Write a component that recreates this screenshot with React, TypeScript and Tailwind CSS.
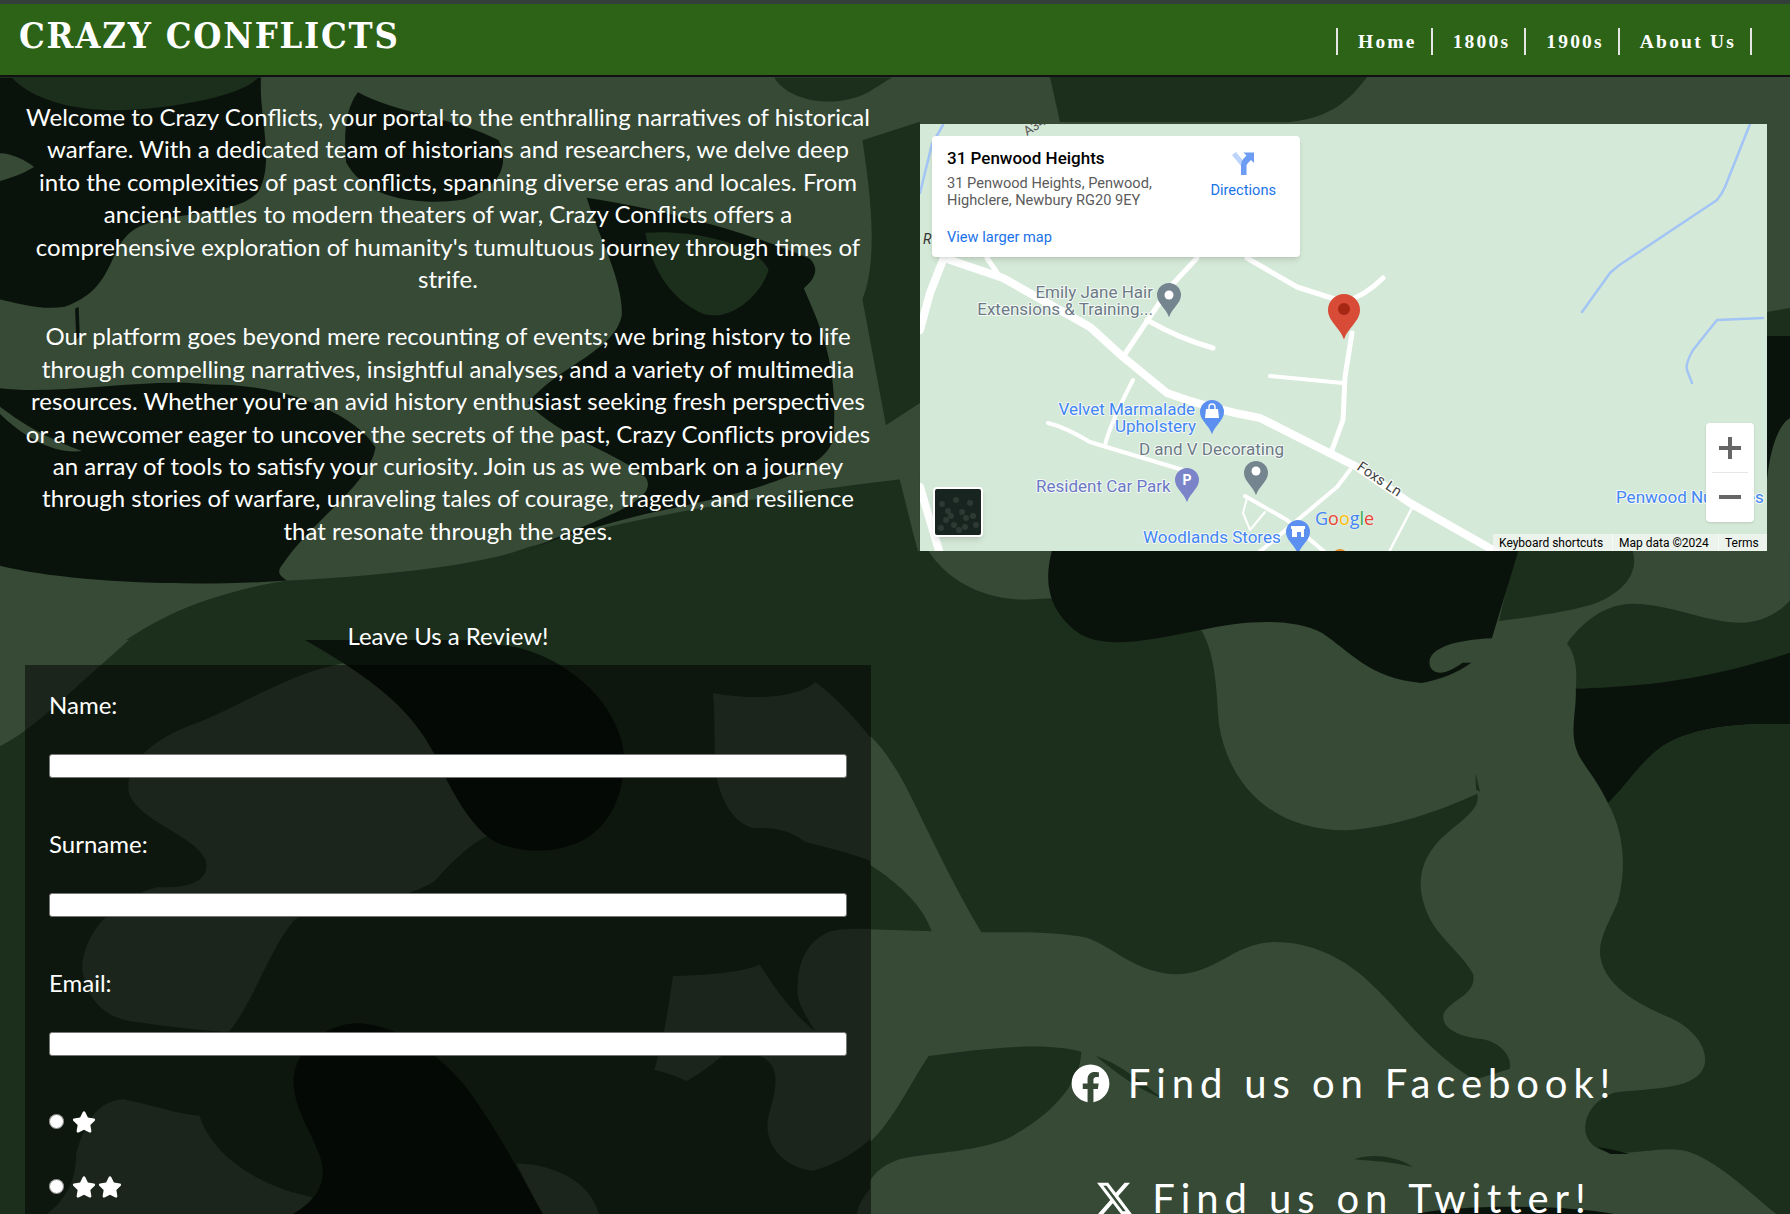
import { FaFacebook, FaStar } from "react-icons/fa";
import { FaXTwitter } from "react-icons/fa6";

const LIGHT = "#364a36";
const MID = "#1c2e1c";
const DARK = "#0a130b";

const CamoBackground = () => (
  <svg className="absolute inset-0" width="1790" height="1214" viewBox="0 0 1790 1214">
    <rect width="1790" height="1214" fill={LIGHT} />

    {/* top left */}
    <g transform="translate(0 70) scale(0.5867 0.37)">
      <path fill={DARK} d="M0 20H445C440 120 470 250 440 330C400 400 280 380 230 430C180 480 200 590 110 640C70 650 30 630 0 620Z" />
      <path fill={MID} d="M20 20C60 90 150 120 250 105C340 90 420 60 440 20Z" />
      <path fill={LIGHT} d="M0 225C20 225 45 245 58 262C40 280 20 290 0 300Z" />
      <path fill={DARK} d="M610 60C680 120 780 130 850 190C870 260 850 320 790 350C700 370 620 340 590 250C585 170 590 100 610 60Z" />
      <path fill={DARK} d="M0 860C100 880 250 830 360 850C500 850 610 940 640 1020C630 1120 530 1220 480 1340C470 1360 480 1370 490 1380C300 1400 100 1380 0 1340Z" />
      <path fill={LIGHT} d="M0 930C40 990 90 1040 140 1030C90 1000 50 970 0 910Z" />
      <path fill={MID} d="M190 1568C250 1500 330 1420 490 1380C600 1370 800 1350 900 1290C1100 1200 1300 1150 1568 1100V1568Z" />
      <path fill={DARK} d="M1000 345C1100 370 1250 420 1380 510C1400 540 1385 570 1370 590C1400 700 1430 800 1420 1000C1400 1100 1250 1150 1100 1200C1000 1240 920 1280 900 1300C1000 1220 1130 1170 1100 1100C1060 1040 950 990 900 900C950 800 1050 760 1060 660C1060 560 1020 450 1000 345Z" />
      <path fill={MID} d="M1100 440C1180 430 1290 470 1310 540C1300 600 1250 680 1200 660C1140 620 1110 530 1100 440Z" />
      <path fill={MID} d="M1568 140L1470 190C1480 300 1500 500 1470 620L1510 960L1568 900Z" />
      <path fill={LIGHT} d="M1568 920L1512 968L1556 1250L1568 1320Z" />
      <path fill={MID} d="M1320 20C1340 80 1420 110 1480 60L1520 20Z" />
      <path fill={DARK} d="M128 645L134 640L136 720L130 730Z" />
    </g>

    {/* top right, around the map */}
    <path fill={MID} d="M1050 77H1367C1350 100 1330 118 1290 122H1060Z" />
    <path fill={MID} d="M1767 312L1790 308V340L1767 343Z" />
    <path fill={DARK} d="M1767 336H1790V418C1778 425 1770 450 1767 480Z" />

    {/* form area */}
    <g transform="translate(0 640) scale(0.5867 0.366)">
      <rect width="1568" height="1568" fill={MID} />
      <path fill={LIGHT} d="M0 0H220C170 70 130 130 80 200C50 240 25 270 0 290Z" />
      <path fill={LIGHT} d="M600 60C500 80 400 190 330 230C260 270 210 340 220 420C240 500 330 530 350 600C360 650 330 680 270 675C200 700 140 800 140 900C150 1000 190 1040 240 1045C300 1060 370 1070 390 1070C430 1000 470 800 510 755C600 740 700 700 740 660C790 570 820 540 840 530C790 470 770 400 740 310C700 190 650 110 600 60Z" />
      <path fill={DARK} d="M520 0C640 110 700 190 740 310C770 420 810 530 850 555C900 590 970 580 1010 530C1060 470 1070 350 1060 280C1040 150 960 50 880 20L800 0Z" />
      <path fill={LIGHT} d="M1215 145C1280 165 1360 160 1390 115C1450 190 1500 290 1530 380C1560 460 1568 600 1568 720C1540 650 1500 610 1460 590C1420 570 1390 560 1370 550C1350 520 1310 510 1285 515C1250 500 1230 440 1222 380C1215 300 1220 200 1215 145Z" />
      <path fill={LIGHT} d="M1568 795V1150C1540 1250 1500 1400 1385 1450C1330 1440 1300 1370 1310 1300C1320 1240 1335 1170 1300 1140L1250 1110C1220 1150 1200 1180 1170 1205C1150 1190 1130 1180 1115 1175C1130 1100 1140 1000 1147 918C1200 915 1260 910 1295 887C1320 950 1350 1020 1390 1070C1370 1020 1355 980 1360 940C1360 860 1390 790 1440 790C1480 785 1530 795 1568 795Z" />
      <path fill={LIGHT} d="M130 1400C150 1300 170 1260 210 1255C260 1270 300 1295 340 1300C360 1400 430 1490 540 1525L500 1568H80C120 1520 130 1460 130 1400Z" />
      <path fill={LIGHT} d="M880 1430C950 1430 1010 1490 1020 1568H925Z" />
      <path fill={LIGHT} d="M1568 1420C1510 1450 1470 1500 1460 1568H1568Z" />
      <path fill={DARK} d="M500 1200C505 1110 560 1040 620 1048C690 1060 770 1150 820 1280C870 1400 900 1500 925 1568H500C540 1530 560 1480 545 1410C530 1340 500 1280 500 1200Z" />
    </g>

    {/* bottom right */}
    <g transform="translate(870 551) scale(0.5867 0.4298)">
      <rect y="0" width="1568" height="1568" fill={LIGHT} />
      <g transform="translate(0 -25)">
        <path fill={MID} d="M0 25H100C130 90 190 140 270 138L310 135L565 210C590 270 590 350 595 430C610 560 680 675 810 675C890 670 970 630 1035 590C1040 620 1020 640 985 680C940 730 930 790 945 850C960 920 1010 960 1028 1010C1035 1060 985 1070 977 1105C975 1140 1010 1155 1040 1160C1085 1170 1095 1215 1090 1230L1030 1255C950 1190 900 1090 860 1040C810 970 750 935 690 935C620 935 590 1010 520 1010C450 1005 420 950 370 925C320 910 250 912 190 912C140 800 90 650 60 570C40 520 20 480 0 455Z" />
        <path fill={MID} d="M0 755C50 800 90 850 105 910L0 905Z" />
        <path fill={MID} d="M100 1200C180 1185 290 1165 360 1190C360 1260 310 1340 230 1395C170 1425 100 1425 50 1440C20 1455 10 1470 0 1490V1400C40 1350 70 1260 100 1200Z" />
        <path fill={MID} d="M1100 25C1090 90 1080 140 1072 188C1130 178 1200 165 1240 145C1290 115 1310 70 1300 25Z" />
        <path fill={MID} d="M1188 240C1220 180 1260 148 1300 148C1370 150 1430 195 1490 192C1530 188 1555 160 1568 140V265C1480 300 1400 335 1300 340L1203 345C1205 310 1205 270 1188 240Z" />
        <path fill={DARK} d="M1203 345C1300 340 1400 335 1568 262V428C1480 425 1400 435 1350 480C1310 520 1290 570 1258 612C1240 560 1220 530 1208 500C1190 450 1205 400 1203 345Z" />
        <path fill={MID} d="M1568 428C1480 425 1400 435 1350 480C1310 520 1290 570 1258 612C1285 680 1290 760 1275 840C1260 890 1240 930 1245 970C1255 1050 1330 1090 1370 1115C1420 1150 1435 1210 1415 1240C1390 1280 1320 1275 1270 1285C1230 1300 1215 1350 1220 1380C1225 1405 1240 1420 1265 1425C1310 1430 1360 1405 1400 1425C1450 1450 1510 1530 1545 1568H1568Z" />
        <path fill={DARK} d="M310 25C295 100 305 170 360 220C410 255 480 230 560 210C640 185 720 180 770 215C820 260 850 320 940 332C970 325 1000 310 1025 285L1010 285C990 305 965 320 955 295C945 255 990 232 1060 228L1105 25Z" />
        <path fill={MID} d="M825 1440C860 1425 900 1435 925 1458C890 1445 860 1445 825 1440Z" />
        <path fill={MID} d="M385 1200C430 1220 470 1270 500 1300C460 1280 420 1240 385 1200Z" />
        <path fill={DARK} d="M930 1568C1000 1545 1180 1545 1270 1568Z" />
        <path fill={DARK} d="M1240 1412C1260 1415 1280 1422 1295 1428L1262 1428Z" />
        <path fill={MID} d="M1032 542L1040 585L1033 580Z" />
      </g>
    </g>
  </svg>
);

const Pin = ({ x, y, r, fill, children }: { x: number; y: number; r: number; fill: string; children?: React.ReactNode }) => (
  <g>
    <path
      fill={fill}
      d={`M${x} ${y + r * 1.85}C${x - r * 0.25} ${y + r * 1.1} ${x - r} ${y + r * 0.7} ${x - r} ${y}A${r} ${r} 0 1 1 ${x + r} ${y}C${x + r} ${y + r * 0.7} ${x + r * 0.25} ${y + r * 1.1} ${x} ${y + r * 1.85}Z`}
    />
    {children}
  </g>
);

const MapLabel = ({ x, y, fill, anchor, children }: { x: number; y: number; fill: string; anchor?: "end" | "start"; children: React.ReactNode }) => (
  <text x={x} y={y} fill={fill} textAnchor={anchor || "start"} fontSize="17" stroke="#ffffff" strokeOpacity="0.75" strokeWidth="2" paintOrder="stroke">
    {children}
  </text>
);

const satelliteSpecks = [
  [7, 15], [13, 22], [21, 11], [27, 23], [11, 31], [19, 36], [31, 29], [35, 14], [38, 27], [24, 41], [6, 39], [16, 27], [30, 38], [41, 36],
];

const GoogleMap = () => (
  <div className="relative w-[847px] h-[427px] bg-[#d5e9d8] overflow-hidden font-['Roboto',sans-serif]">
    <svg className="absolute inset-0" width="847" height="427" viewBox="0 0 847 427" fill="none" strokeLinecap="round" strokeLinejoin="round">
      {/* water */}
      <g stroke="#a3c5f5" strokeWidth="2.5">
        <path d="M830 0L805 63Q802 70 797 76L707 136Q697 142 690 149L662 188" />
        <path d="M843 194L797 196L773 226Q765 240 767 246L772 259" />
        <path d="M23 1L12 20L0 69" />
      </g>
      {/* roads */}
      <g stroke="#ffffff">
        <path strokeWidth="8" d="M30 136L83 154L170 203L203 233L247 269Q290 285 340 294L437 343L490 379L580 430" />
        <path strokeWidth="8" d="M23 136L10 169L0 206" />
        <path strokeWidth="8" d="M0 363L20 430" />
        <path strokeWidth="5" d="M67 134L80 153" />
        <path strokeWidth="5" d="M277 134L250 163L203 233" />
        <path strokeWidth="5" d="M227 196Q260 215 293 224" />
        <path strokeWidth="5" d="M327 134L377 163L424 178Q445 172 463 154" />
        <path strokeWidth="5" d="M432 209L425 253L423 296L412 326" />
        <path strokeWidth="4" d="M350 252L423 259" />
        <path strokeWidth="4" d="M128 299Q145 303 170 318L183 322L263 346" />
        <path strokeWidth="4" d="M213 256Q190 300 185 321" />
        <path strokeWidth="4" d="M430 346L417 363L337 430" />
        <path strokeWidth="4" d="M325 372L367 396L407 430" />
        <path strokeWidth="2" d="M327 374L323 389L330 406L345 388" />
        <path strokeWidth="2.5" d="M492 384L468 430" />
      </g>
      <g stroke="none">
        <text x="0" y="0" transform="translate(107 12) rotate(-32)" fill="#555" fontSize="13">A34</text>
        <text x="3" y="120" fill="#333" fontSize="14" fontStyle="italic">R</text>
        <text x="0" y="0" transform="translate(436 345) rotate(34)" fill="#444" fontSize="14.5" stroke="#fff" strokeWidth="2" paintOrder="stroke">Foxs Ln</text>
        <MapLabel x={233} y={174} fill="#6b7a85" anchor="end">Emily Jane Hair</MapLabel>
        <MapLabel x={233} y={191} fill="#6b7a85" anchor="end">Extensions &amp; Training...</MapLabel>
        <MapLabel x={275} y={291} fill="#4285f4" anchor="end">Velvet Marmalade</MapLabel>
        <MapLabel x={276} y={308} fill="#4285f4" anchor="end">Upholstery</MapLabel>
        <MapLabel x={219} y={331} fill="#6b7a85">D and V Decorating</MapLabel>
        <MapLabel x={116} y={368} fill="#6b78c6">Resident Car Park</MapLabel>
        <MapLabel x={223} y={419} fill="#4285f4">Woodlands Stores</MapLabel>
        <MapLabel x={696} y={379} fill="#4285f4">Penwood Nurseries</MapLabel>
        <Pin x={249} y={171} r={12} fill="#75858f"><circle cx="249" cy="171" r="4.5" fill="#fff" /></Pin>
        <Pin x={292} y={288} r={12} fill="#5b8ff0">
          <path fill="#fff" d="M286 285H298L299 294H285Z" />
          <path stroke="#fff" strokeWidth="1.4" fill="none" d="M289 285V283A3 3 0 0 1 295 283V285" />
        </Pin>
        <Pin x={336} y={349} r={12} fill="#75858f"><circle cx="336" cy="347" r="4.5" fill="#fff" /></Pin>
        <Pin x={267} y={356} r={12} fill="#7b84c9">
          <text x="267" y="361" fill="#fff" fontSize="14" fontWeight="700" textAnchor="middle">P</text>
        </Pin>
        <Pin x={378} y={408} r={12} fill="#5b8ff0">
          <path fill="#fff" d="M371 402H385V405H384V413H381V408H377V413H372V405H371Z" />
        </Pin>
        <circle cx="420" cy="433" r="8" fill="#e8912d" />
        <text x="395" y="401" fontSize="18" fontFamily="'Open Sans',sans-serif" stroke="#fff" strokeOpacity="0.5" strokeWidth="1" paintOrder="stroke">
          <tspan fill="#4285f4">G</tspan>
          <tspan fill="#ea4335">o</tspan>
          <tspan fill="#fbbc05">o</tspan>
          <tspan fill="#4285f4">g</tspan>
          <tspan fill="#34a853">l</tspan>
          <tspan fill="#ea4335">e</tspan>
        </text>
        <Pin x={424} y={186} r={16} fill="#d84b37"><circle cx="424" cy="185" r="6" fill="#a52714" /></Pin>
      </g>
    </svg>

    {/* info card */}
    <div className="absolute left-3 top-3 w-[368px] h-[121px] bg-white rounded-sm shadow-md pl-[15px] pr-6 pt-[12px] flex justify-between">
      <div>
        <div className="text-[17px] leading-5 font-medium text-black">31 Penwood Heights</div>
        <div className="mt-[7px] text-[14.6px] leading-[17px] text-[#5b5b5b]">
          31 Penwood Heights, Penwood,
          <br />
          Highclere, Newbury RG20 9EY
        </div>
        <div className="mt-5 text-[14.6px] leading-[17px] text-[#1a73e8]">View larger map</div>
      </div>
      <div className="flex flex-col items-center pt-[3px]">
        <svg width="24" height="24" viewBox="0 0 24 24">
          <path fill="#bcd3fb" d="M1 4L5 1L14 12V15H10Z" />
          <path fill="#6d9cf5" d="M10 24V14Q10 10 13 7L15.5 4.5L12.5 1.5H23V12L20 9L17 12Q15.5 13.5 15.5 15V24Z" />
        </svg>
        <div className="mt-[7px] text-[14.6px] leading-[17px] text-[#1a73e8]">Directions</div>
      </div>
    </div>

    {/* satellite thumb */}
    <div className="absolute left-[13px] top-[363px] w-[50px] h-[50px] border-2 border-white rounded-sm shadow-md bg-[#18241f]">
      <svg width="46" height="46" viewBox="0 0 46 46">
        {satelliteSpecks.map(([cx, cy]) => (
          <circle key={`${cx}-${cy}`} cx={cx} cy={cy} r="3" fill="#47564b" opacity="0.45" />
        ))}
      </svg>
    </div>

    {/* zoom control */}
    <div className="absolute left-[786px] top-[299px] w-12 h-[99px] bg-white rounded-sm shadow flex flex-col items-center">
      <svg className="mt-[13px]" width="24" height="24" viewBox="0 0 24 24"><path fill="#666" d="M10 1H14V10H23V14H14V23H10V14H1V10H10Z" /></svg>
      <div className="mt-[12px] w-9 h-px bg-[#e6e6e6]" />
      <svg className="mt-[12px]" width="24" height="24" viewBox="0 0 24 24"><path fill="#666" d="M1 10H23V14H1Z" /></svg>
    </div>

    {/* attribution */}
    <div className="absolute right-0 bottom-0 h-[17px] flex text-[12px] leading-[18px] text-black">
      <div className="bg-[#f5f5f5]/70 pl-[6px] border-r border-white/50 w-[120px]">Keyboard shortcuts</div>
      <div className="bg-[#f5f5f5]/70 pl-[6px] w-[106px] border-r border-white/50">Map data ©2024</div>
      <div className="bg-[#f5f5f5]/70 pl-[6px] w-[48px]">Terms</div>
    </div>
  </div>
);

const navLinks = ["Home", "1800s", "1900s", "About Us"];

const ReviewField = ({ label }: { label: string }) => (
  <div className="mb-[50px]">
    <label className="block text-[24px] leading-8 mb-[33px]">{label}</label>
    <input type="text" className="block w-full h-6 bg-white border border-[#767676] rounded-[3px]" />
  </div>
);

const StarOption = ({ count }: { count: number }) => (
  <div className="flex items-center h-[65px] gap-2">
    <input type="radio" name="stars" className="w-[15px] h-[15px] m-0" />
    <div className="flex gap-[2px]">
      {Array.from({ length: count }).map((_, i) => (
        <FaStar key={i} size={24} />
      ))}
    </div>
  </div>
);

const App = () => {
  return (
    <div className="relative w-[1790px] h-[1214px] overflow-hidden text-white font-['Lato',sans-serif]">
      <CamoBackground />

      <div className="relative">
        <header className="mt-[4px] h-[73px] bg-[#2c6317] border-b-2 border-[#111] flex justify-between items-start pl-[19px] pr-[38px]">
          <h1 className="mt-[7px] text-[36px] leading-[48px] font-bold tracking-[1.8px] font-['DejaVu_Serif_Condensed','DejaVu_Serif',serif]">CRAZY CONFLICTS</h1>
          <nav className="mt-[24px] flex border-r-2 border-[#e5e5e5] font-['Liberation_Serif',serif]">
            {navLinks.map((link) => (
              <a key={link} className="h-[27px] border-l-2 border-[#e5e5e5] pl-[20px] pr-[14px] text-[19.5px] leading-[27px] font-bold tracking-[2.2px]">
                {link}
              </a>
            ))}
          </nav>
        </header>
      </div>

      <div className="absolute top-0 left-0 right-0 h-[4px] bg-[#333f3a]" />

      <main className="relative flex">
        <section className="w-[895px] pl-[25px] pr-6 pt-6">
          <div className="text-[24px] leading-[32.4px] text-center">
            <p className="mb-[25px]">
              Welcome to Crazy Conflicts, your portal to the enthralling narratives of historical warfare. With a dedicated team of historians and researchers, we delve deep into the complexities of past conflicts, spanning diverse eras and locales. From ancient battles to modern theaters of war, Crazy Conflicts offers a comprehensive exploration of humanity's tumultuous journey through times of strife.
            </p>
            <p>
              Our platform goes beyond mere recounting of events; we bring history to life through compelling narratives, insightful analyses, and a variety of multimedia resources. Whether you're an avid history enthusiast seeking fresh perspectives or a newcomer eager to uncover the secrets of the past, Crazy Conflicts provides an array of tools to satisfy your curiosity. Join us as we embark on a journey through stories of warfare, unraveling tales of courage, tragedy, and resilience that resonate through the ages.
            </p>
          </div>

          <h2 className="mt-[73px] text-[24px] leading-8 text-center">Leave Us a Review!</h2>

          <form className="mt-[13px] bg-black/50 pt-6 px-6 h-[600px]">
            <ReviewField label="Name:" />
            <ReviewField label="Surname:" />
            <ReviewField label="Email:" />
            <div className="-mt-[17px]">
              <StarOption count={1} />
              <StarOption count={2} />
            </div>
          </form>
        </section>

        <section className="w-[895px] pl-[25px] pr-[23px] pt-[47px]">
          <GoogleMap />
          <div className="mt-[507px] flex flex-col items-center gap-[65px] text-[40px] leading-[50px] tracking-[5.9px]">
            <a className="flex items-center gap-[18px]">
              <FaFacebook size={39} />
              Find us on Facebook!
            </a>
            <a className="flex items-center gap-[18px]">
              <FaXTwitter size={39} />
              Find us on Twitter!
            </a>
          </div>
        </section>
      </main>
    </div>
  );
};

export default App;
